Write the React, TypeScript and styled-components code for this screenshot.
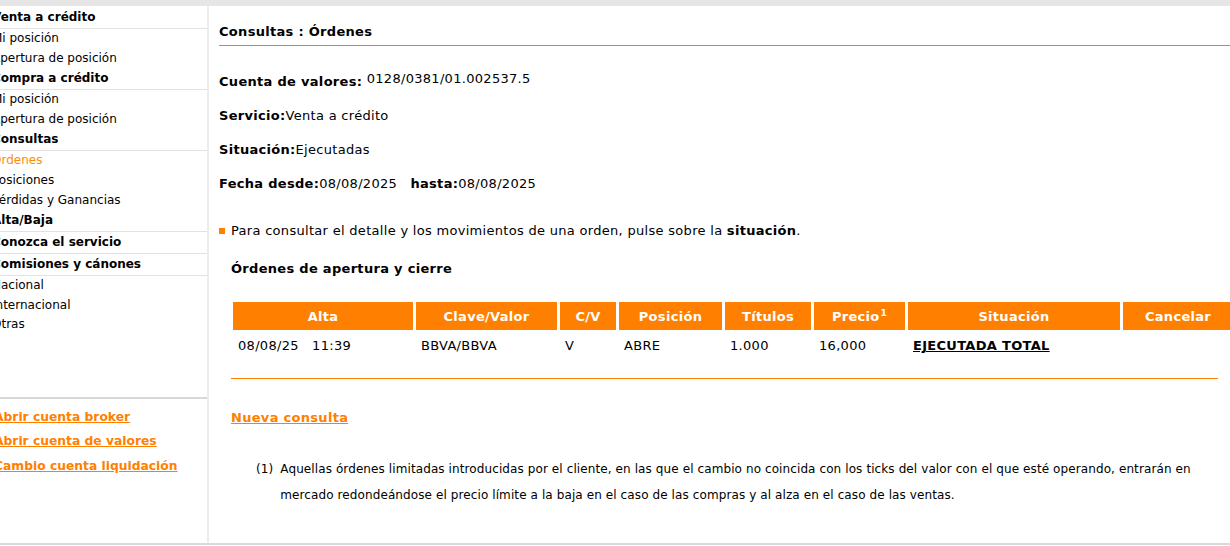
import styled, { createGlobalStyle } from "styled-components";

const GlobalStyle = createGlobalStyle`
  html, body {
    margin: 0;
    padding: 0;
    overflow: hidden;
    background: #fff;
  }
  body {
    font-family: "DejaVu Sans", Verdana, sans-serif;
    font-size: 13px;
    color: #000;
  }
`;

type MenuEntry = { label: string; kind: "header" | "item"; active?: boolean };

const menu: MenuEntry[] = [
  { label: "Venta a crédito", kind: "header" },
  { label: "Mi posición", kind: "item" },
  { label: "Apertura de posición", kind: "item" },
  { label: "Compra a crédito", kind: "header" },
  { label: "Mi posición", kind: "item" },
  { label: "Apertura de posición", kind: "item" },
  { label: "Consultas", kind: "header" },
  { label: "Órdenes", kind: "item", active: true },
  { label: "Posiciones", kind: "item" },
  { label: "Pérdidas y Ganancias", kind: "item" },
  { label: "Alta/Baja", kind: "header" },
  { label: "Conozca el servicio", kind: "header" },
  { label: "Comisiones y cánones", kind: "header" },
  { label: "Nacional", kind: "item" },
  { label: "Internacional", kind: "item" },
  { label: "Otras", kind: "item" },
];

const sideLinks = [
  "Abrir cuenta broker",
  "Abrir cuenta de valores",
  "Cambio cuenta liquidación",
];

const columns = [
  { title: "Alta", width: 180 },
  { title: "Clave/Valor", width: 141 },
  { title: "C/V", width: 56 },
  { title: "Posición", width: 103 },
  { title: "Títulos", width: 86 },
  { title: "Precio", width: 91, note: "1" },
  { title: "Situación", width: 212 },
  { title: "Cancelar", width: 110 },
];

export default function App() {
  return (
    <>
      <GlobalStyle />
      <Page>
        <Sidebar>
          <Menu>
            {menu.map((entry, i) =>
              entry.kind === "header" ? (
                <MenuHeader key={i}>{entry.label}</MenuHeader>
              ) : (
                <MenuItem key={i} active={!!entry.active}>
                  {entry.label}
                </MenuItem>
              )
            )}
          </Menu>
          <SideLinks>
            {sideLinks.map((l) => (
              <SideLink key={l} href="#">
                {l}
              </SideLink>
            ))}
          </SideLinks>
        </Sidebar>

        <Main>
          <Title>Consultas : Órdenes</Title>

          <InfoRow>
            <b>Cuenta de valores:</b> <Raised>0128/0381/01.002537.5</Raised>
          </InfoRow>
          <InfoRow>
            <b>Servicio:</b>Venta a crédito
          </InfoRow>
          <InfoRow>
            <b>Situación:</b>Ejecutadas
          </InfoRow>
          <InfoRow>
            <b>Fecha desde:</b>08/08/2025&nbsp;&nbsp; <b>hasta:</b>08/08/2025
          </InfoRow>

          <Notice>
            <Bullet />
            <span>
              Para consultar el detalle y los movimientos de una orden, pulse
              sobre la <b>situación</b>.
            </span>
          </Notice>

          <Section>
            <SectionTitle>Órdenes de apertura y cierre</SectionTitle>
            <Orders>
              <colgroup>
                {columns.map((c) => (
                  <col key={c.title} style={{ width: c.width }} />
                ))}
              </colgroup>
              <thead>
                <tr>
                  {columns.map((c) => (
                    <Th key={c.title}>
                      {c.title}
                      {c.note && <sup>{c.note}</sup>}
                    </Th>
                  ))}
                </tr>
              </thead>
              <tbody>
                <tr>
                  <Td>08/08/25&nbsp;&nbsp; 11:39</Td>
                  <Td>BBVA/BBVA</Td>
                  <Td>V</Td>
                  <Td>ABRE</Td>
                  <Td>1.000</Td>
                  <Td>16,000</Td>
                  <Td>
                    <StatusLink href="#">EJECUTADA TOTAL</StatusLink>
                  </Td>
                  <Td />
                </tr>
              </tbody>
            </Orders>
            <Divider />
            <NewQuery href="#">Nueva consulta</NewQuery>
            <Footnote>
              <NoteMark>(1)</NoteMark>
              <span>
                Aquellas órdenes limitadas introducidas por el cliente, en las
                que el cambio no coincida con los ticks del valor con el que
                esté operando, entrarán en mercado redondeándose el precio
                límite a la baja en el caso de las compras y al alza en el caso
                de las ventas.
              </span>
            </Footnote>
          </Section>
        </Main>
      </Page>
    </>
  );
}

const Page = styled.div`
  display: flex;
  height: 537px;
  border-top: 6px solid #e6e6e6;
  border-bottom: 2px solid #dadada;
`;

const Sidebar = styled.aside`
  width: 207px;
  flex-shrink: 0;
  border-right: 2px solid #ececec;
  display: flex;
  flex-direction: column;
  overflow: hidden;
`;

const Menu = styled.nav`
  display: flex;
  flex-direction: column;
  margin-left: -8px;
  padding-top: 1px;
`;

const MenuHeader = styled.div`
  height: 21px;
  line-height: 21px;
  font-size: 12px;
  font-weight: bold;
  border-bottom: 1px solid #e2e2e2;
  white-space: nowrap;
`;

const MenuItem = styled.div<{ active: boolean }>`
  height: 19.6px;
  line-height: 19.6px;
  font-size: 12px;
  color: ${({ active }) => (active ? "#ff8c00" : "#000")};
  white-space: nowrap;
`;

const SideLinks = styled.div`
  margin-top: 62px;
  border-top: 2px solid #d8d8d8;
  padding-top: 6px;
  margin-left: -6px;
  display: flex;
  flex-direction: column;
`;

const SideLink = styled.a`
  font-size: 12.3px;
  font-weight: bold;
  line-height: 24.5px;
  color: #ff7f00;
  white-space: nowrap;
`;

const Main = styled.main`
  flex: 1;
  min-width: 0;
  padding-left: 10px;
  overflow: hidden;
  letter-spacing: 0.3px;
`;

const Title = styled.h1`
  margin: 0;
  padding: 18px 0 5px;
  font-size: 13px;
  line-height: 16px;
  font-weight: bold;
  border-bottom: 1px solid #ef7d1a;
`;

const InfoRow = styled.p`
  margin: 18px 0 0;
  line-height: 16px;
  &:first-of-type {
    margin-top: 25px;
  }
`;

const Raised = styled.span`
  vertical-align: 3px;
`;

const Notice = styled.p`
  margin: 31px 0 0;
  line-height: 16px;
  display: flex;
  align-items: center;
  gap: 6px;
`;

const Bullet = styled.span`
  width: 6px;
  height: 6px;
  background: #ff8000;
  flex-shrink: 0;
`;

const Section = styled.section`
  padding-left: 12px;
  width: 987px;
`;

const SectionTitle = styled.h2`
  margin: 22px 0 0;
  font-size: 13px;
  line-height: 16px;
  font-weight: bold;
`;

const Orders = styled.table`
  margin-top: 22px;
  margin-left: -1px;
  border-collapse: separate;
  border-spacing: 3px;
  table-layout: fixed;
  width: 1006px;
`;

const Th = styled.th`
  height: 28px;
  padding: 0;
  background: #ff8000;
  color: #fff;
  font-weight: bold;
  font-size: 13px;
  text-align: center;
  sup {
    font-size: 9px;
    vertical-align: 5px;
    margin-left: 1px;
  }
`;

const Td = styled.td`
  height: 21px;
  padding: 5px 0 0 5px;
  vertical-align: top;
  line-height: 16px;
  font-size: 13px;
  white-space: nowrap;
`;

const StatusLink = styled.a`
  color: #000;
  font-weight: bold;
  text-decoration: underline;
`;

const Divider = styled.hr`
  margin: 16px 0 0;
  border: 0;
  border-top: 1px solid #ff8000;
`;

const NewQuery = styled.a`
  display: inline-block;
  margin-top: 31px;
  font-size: 13px;
  font-weight: bold;
  line-height: 16px;
  color: #ff7f00;
`;

const Footnote = styled.p`
  margin: 30px 0 0 25px;
  line-height: 26px;
  font-size: 12px;
  letter-spacing: 0.1px;
  display: flex;
  gap: 7px;
`;

const NoteMark = styled.span`
  flex-shrink: 0;
`;
